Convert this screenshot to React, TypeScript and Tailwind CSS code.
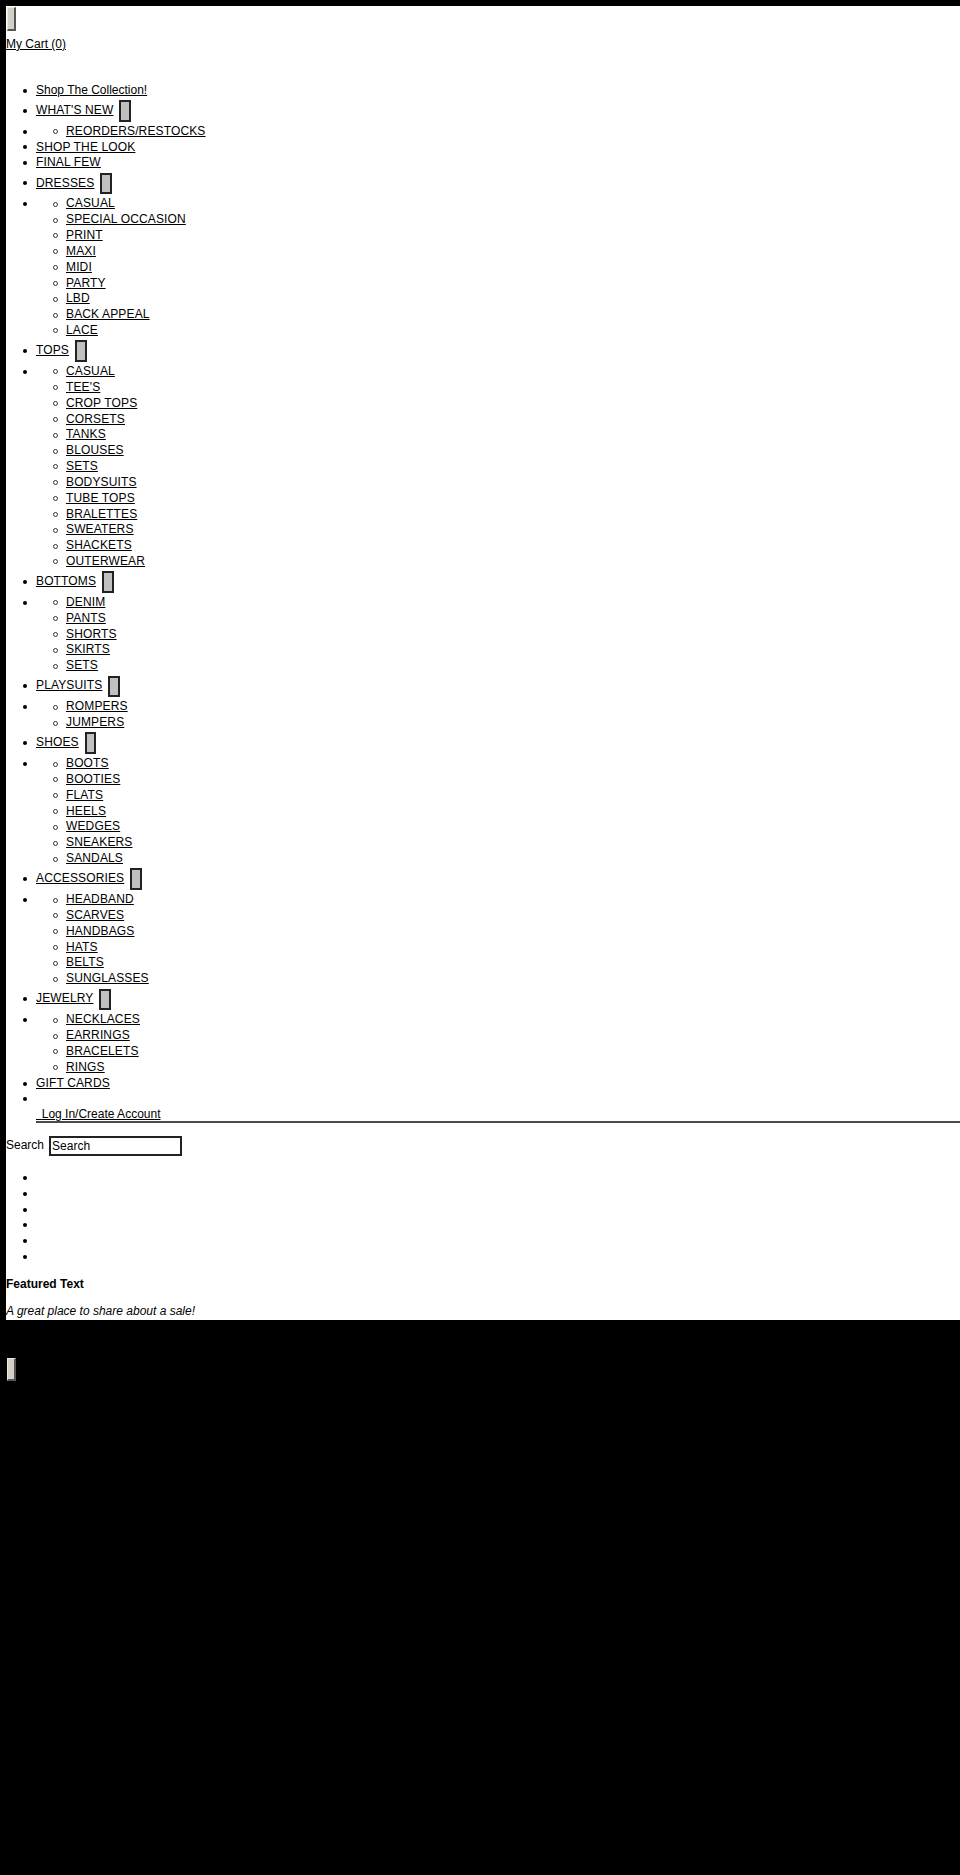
import React from "react";

type NavItem = { label: string; sub?: string[] };

const NAV: NavItem[] = [
  { label: "Shop The Collection!" },
  { label: "WHAT'S NEW", sub: ["REORDERS/RESTOCKS"] },
  { label: "SHOP THE LOOK" },
  { label: "FINAL FEW" },
  {
    label: "DRESSES",
    sub: ["CASUAL", "SPECIAL OCCASION", "PRINT", "MAXI", "MIDI", "PARTY", "LBD", "BACK APPEAL", "LACE"],
  },
  {
    label: "TOPS",
    sub: [
      "CASUAL",
      "TEE'S",
      "CROP TOPS",
      "CORSETS",
      "TANKS",
      "BLOUSES",
      "SETS",
      "BODYSUITS",
      "TUBE TOPS",
      "BRALETTES",
      "SWEATERS",
      "SHACKETS",
      "OUTERWEAR",
    ],
  },
  { label: "BOTTOMS", sub: ["DENIM", "PANTS", "SHORTS", "SKIRTS", "SETS"] },
  { label: "PLAYSUITS", sub: ["ROMPERS", "JUMPERS"] },
  { label: "SHOES", sub: ["BOOTS", "BOOTIES", "FLATS", "HEELS", "WEDGES", "SNEAKERS", "SANDALS"] },
  { label: "ACCESSORIES", sub: ["HEADBAND", "SCARVES", "HANDBAGS", "HATS", "BELTS", "SUNGLASSES"] },
  { label: "JEWELRY", sub: ["NECKLACES", "EARRINGS", "BRACELETS", "RINGS"] },
  { label: "GIFT CARDS" },
];

// Capitalised menu labels sit a touch wider than mixed-case ones.
const caps = (s: string) => (s === s.toUpperCase() ? "tracking-[0.14px]" : "");

function Disc() {
  return (
    <span className="flex h-[15.84px] w-[30px] shrink-0 items-center justify-end pr-[9px]">
      <span className="block h-[4px] w-[4px] rounded-full bg-black" />
    </span>
  );
}

function Ring() {
  return (
    <span className="flex h-[15.84px] w-[30px] shrink-0 items-center justify-end pr-[8.5px]">
      <span className="block h-[5px] w-[5px] rounded-full border border-[#333]" />
    </span>
  );
}

function PlainRow({ label }: { label: string }) {
  return (
    <li className="flex h-[15.84px] items-center">
      <Disc />
      <a href="#" className={`underline ${caps(label)}`}>
        {label}
      </a>
    </li>
  );
}

function ToggleRow({ label }: { label: string }) {
  return (
    <li className="flex h-[25.2px] items-start">
      <span className="mt-[4.3px]">
        <Disc />
      </span>
      <a href="#" className={`mt-[4.3px] underline ${caps(label)}`}>
        {label}
      </a>
      <button
        type="button"
        aria-label={`Toggle ${label}`}
        className="ml-[6px] mt-[1.4px] h-[21.7px] w-[11.5px] border-2 border-[#222] bg-[#c0c0c0]"
      />
    </li>
  );
}

function SubList({ items }: { items: string[] }) {
  return (
    <li className="flex items-start">
      <Disc />
      <ul>
        {items.map((s) => (
          <li key={s} className="flex h-[15.84px] items-center">
            <Ring />
            <a href="#" className="underline tracking-[0.14px]">
              {s}
            </a>
          </li>
        ))}
      </ul>
    </li>
  );
}

function SystemButton({ label }: { label: string }) {
  return (
    <button
      type="button"
      aria-label={label}
      className="block h-[23.4px] w-[9px] border-l border-t border-r-2 border-b-2 border-l-[#ece9e2] border-t-[#ece9e2] border-r-[#555] border-b-[#555] bg-[#d4d0c8]"
    />
  );
}

export default function App() {
  return (
    <div className="min-h-[1875px] bg-black pl-[6px] pt-[6px] font-['Liberation_Sans',Arial,sans-serif] text-[12px] leading-[15.84px] text-black">
      <div className="bg-white">
        <div className="pl-[1.3px] pt-[1.3px]">
          <SystemButton label="Menu" />
        </div>
        <a href="#" className="mt-[6px] block w-fit underline">
          My Cart (0)
        </a>

        <nav className="mt-[30.2px]">
          <ul>
            {NAV.map((item) =>
              item.sub ? (
                <React.Fragment key={item.label}>
                  <ToggleRow label={item.label} />
                  <SubList items={item.sub} />
                </React.Fragment>
              ) : (
                <PlainRow key={item.label} label={item.label} />
              )
            )}
            <li className="flex h-[15.84px] items-center">
              <Disc />
            </li>
          </ul>
          <div className="ml-[30px]">
            <a href="#" className="block h-[15.84px] w-fit underline">
              <span className="tracking-[2.4px]">{"\u00a0"}</span>
              Log In/Create Account
            </a>
            <div className="-mt-[2px] h-[2px] bg-[#4a4a4a]" />
          </div>
        </nav>

        <form className="mt-[13.2px] flex h-[20px] items-center" onSubmit={(e) => e.preventDefault()}>
          <label htmlFor="site-search">Search</label>
          <input
            id="site-search"
            type="text"
            placeholder="Search"
            className="ml-[5px] h-[20px] w-[132.5px] border-2 border-[#222] px-[1px] text-[12px] leading-[15.84px] text-black outline-none placeholder:text-black"
          />
        </form>

        <ul className="mt-[13.8px]">
          {Array.from({ length: 6 }).map((_, i) => (
            <li key={i} className="flex h-[15.84px] items-center">
              <Disc />
            </li>
          ))}
        </ul>

        <h4 className="mt-[11.6px] font-bold">Featured Text</h4>
        <p className="mt-[11.8px] italic">A great place to share about a sale!</p>
      </div>

      <div className="mt-[37.4px] pl-[1.3px]">
        <SystemButton label="Back to top" />
      </div>
    </div>
  );
}
